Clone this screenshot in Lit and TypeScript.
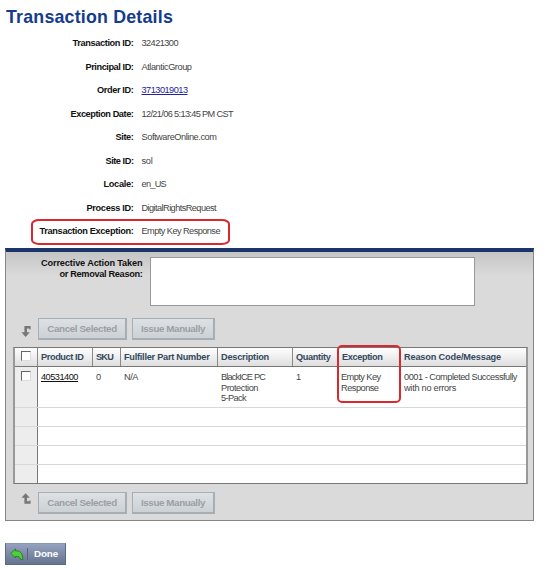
import { LitElement, html, css, svg } from "lit";
import { customElement, property } from "lit/decorators.js";

/** A single line of text whose tracking is adjusted to fill a given width. */
@customElement("fit-text")
class FitText extends LitElement {
  @property({ type: Number }) w = 0;
  static styles = css`
    :host { display: inline-block; white-space: nowrap; }
  `;
  render() {
    return html`<slot></slot>`;
  }
  firstUpdated() {
    const n = (this.textContent ?? "").length;
    const natural = this.getBoundingClientRect().width;
    if (n && natural) {
      const gap = (this.w - natural) / n;
      this.style.letterSpacing = `${gap.toFixed(3)}px`;
    }
  }
}

const fields: [string, number, string, number][] = [
  ["Transaction ID:", 61, "32421300", 36.5],
  ["Principal ID:", 48, "AtlanticGroup", 50],
  ["Order ID:", 36.5, "3713019013", 46],
  ["Exception Date:", 63, "12/21/06 5:13:45 PM CST", 91.5],
  ["Site:", 18, "SoftwareOnline.com", 75],
  ["Site ID:", 28, "sol", 11],
  ["Locale:", 30, "en_US", 24.5],
  ["Process ID:", 47, "DigitalRightsRequest", 74.5],
  ["Transaction Exception:", 94, "Empty Key Response", 78.5],
];

const headers: [string, number][] = [
  ["Product ID", 42.5],
  ["SKU", 17],
  ["Fulfiller Part Number", 85.5],
  ["Description", 48],
  ["Quantity", 34.5],
  ["Exception", 40.5],
  ["Reason Code/Message", 97],
];

const cells: [string, number][][] = [
  [["40531400", 37]],
  [["0", 5]],
  [["N/A", 14]],
  [["BlackICE PC", 44], ["Protection", 37], ["5-Pack", 25]],
  [["1", 5]],
  [["Empty Key", 39.5], ["Response", 37.5]],
  [["0001 - Completed Successfully", 113], ["with no errors", 52]],
];

const downArrow = svg`<path d="M3.4 0H9.6V3.6H8.4V2.6H6V6.2H8.8L4.6 11L0.4 6.2H3.4Z" fill="#777"/>`;
const upArrow = svg`<path d="M3.4 10.8H9.6V7.4H8.4V8.2H6V4.8H8.8L4.6 0.2L0.4 4.8H3.4Z" fill="#777"/>`;

@customElement("app-root")
class AppRoot extends LitElement {
  static styles = css`
    * { box-sizing: border-box; }
    :host {
      display: block;
      position: relative;
      width: 550px;
      height: 570px;
      overflow: hidden;
      background: #fff;
      color: #444;
      font: 9.2px/10.6px "Liberation Sans", Arial, sans-serif;
    }
    h1 {
      margin: 0;
      padding: 7px 0 0 6px;
      height: 32px;
      font-size: 17.8px;
      line-height: 20px;
      color: #143c8c;
    }
    .field { display: flex; height: 23.5px; align-items: center; }
    .label {
      width: 133.5px;
      margin-right: 8px;
      text-align: right;
      font-weight: bold;
      color: #111;
    }
    .link { color: #22229a; text-decoration: underline; }
    .panel {
      margin: 4.5px 0 0 5px;
      width: 529px;
      height: 273px;
      border: 1px solid #858585;
      border-top: 4px solid #1b356b;
      background: linear-gradient(#c5c5c5, #dadada 24px);
    }
    .reason { display: flex; height: 66px; padding-top: 5px; }
    .caption {
      width: 136.5px;
      margin-right: 7.5px;
      padding-top: 1px;
      text-align: right;
      font-weight: bold;
      color: #111;
    }
    .area {
      width: 325px;
      height: 49px;
      background: #fff;
      border: 1px solid #999;
    }
    .actions { display: flex; height: 22px; padding-left: 14px; }
    .actions svg { width: 12px; height: 12px; margin: 8px 5px 0 1px; }
    .actions.low svg { margin-top: 1px; }
    .btn {
      height: 22px;
      display: flex;
      align-items: center;
      justify-content: center;
      border: 1px solid #a6adb3;
      border-right-width: 2px;
      border-bottom-width: 2px;
      background: linear-gradient(#dde1e4, #ccd1d6);
      color: #9b9fa3;
      font-weight: bold;
      font-size: 9.8px;
      padding-top: 1px;
    }
    .cancel { width: 89px; margin-right: 5px; }
    .issue { width: 83px; }
    .table {
      margin: 7px 0 8px 7px;
      width: 515px;
      height: 137px;
      border: 1px solid #777;
      border-left: 2px solid #999;
      border-right: 2px solid #999;
      background: #fff;
    }
    .row {
      display: grid;
      grid-template-columns: 22px 55px 28px 97px 75px 45px 62px 1fr;
      height: 19px;
      border-bottom: 1px solid #d8d8d8;
    }
    .row:last-child { height: 18px; border-bottom: 0; }
    .row > div { padding: 5px 0 0 4px; }
    .row > .pick { padding: 3px 0 0 6px; background: #ededed; }
    .row > .first { border-left: 1px solid #777; padding-left: 4px; }
    .head {
      border-bottom: 1px solid #777;
      background: linear-gradient(#fff, #dedede);
      color: #34495e;
      font-weight: bold;
    }
    .row.head > div { border-left: 1px solid #888; padding: 4px 0 0 3px; }
    .row.head > .pick { border-left: 0; background: none; padding: 3px 0 0 6px; }
    .row.head > .exc { border-left-color: transparent; padding-left: 4px; }
    .row.head > div:last-child { padding-left: 4px; }
    .body { height: 41px; }
    .row.body > .first { padding-left: 3px; }
    .row.body > .pick { padding-top: 4px; }
    .row.body > div:last-child { padding-left: 5px; }
    .pid { color: #111; text-decoration: underline; }
    .box {
      width: 10px;
      height: 10px;
      background: #fff;
      border: 1px solid #ddd;
      border-top: 1px solid #666;
      border-left: 1px solid #666;
    }
    .done {
      margin: 22px 0 0 5px;
      width: 61px;
      height: 22px;
      display: flex;
      align-items: center;
      border: 1px solid #5d6a86;
      border-top-color: #8b97b1;
      background: linear-gradient(#94a2bf, #66738f);
      color: #fff;
      font-weight: bold;
      font-size: 9.8px;
    }
    .done svg { width: 14px; height: 13px; margin-left: 4px; }
    .bar { width: 1px; height: 12px; background: #56647f; margin: 0 6px 0 3px; }
    .mark {
      position: absolute;
      border: 2px solid #d9282e;
    }
    .mark-field { left: 30.5px; top: 219px; width: 199px; height: 26px; border-radius: 8px / 5px; }
    .mark-col { left: 337px; top: 345px; width: 64px; height: 58px; border-radius: 5px; }
  `;

  private actions(low: boolean) {
    return html`<div class="actions ${low ? "low" : ""}">
      <svg viewBox="0 0 12 12">${low ? upArrow : downArrow}</svg>
      <div class="btn cancel"><fit-text w="69.5">Cancel Selected</fit-text></div>
      <div class="btn issue"><fit-text w="64">Issue Manually</fit-text></div>
    </div>`;
  }

  render() {
    return html`
      <h1><fit-text w="167">Transaction Details</fit-text></h1>
      ${fields.map(
        ([label, lw, value, vw]) => html`<div class="field">
          <div class="label"><fit-text w=${lw}>${label}</fit-text></div>
          <fit-text class=${label === "Order ID:" ? "link" : ""} w=${vw}>${value}</fit-text>
        </div>`
      )}
      <div class="panel">
        <div class="reason">
          <div class="caption">
            <fit-text w="101.5">Corrective Action Taken</fit-text>
            <fit-text w="83">or Removal Reason:</fit-text>
          </div>
          <div class="area"></div>
        </div>
        ${this.actions(false)}
        <div class="table">
          <div class="row head">
            <div class="pick"><div class="box"></div></div>
            ${headers.map(
              ([t, w], i) => html`<div class=${i === 5 ? "exc" : i === 0 ? "first" : ""}>
                <fit-text w=${w}>${t}</fit-text>
              </div>`
            )}
          </div>
          <div class="row body">
            <div class="pick"><div class="box"></div></div>
            ${cells.map(
              (lines, i) => html`<div class=${i === 5 ? "exc" : i === 0 ? "first" : ""}>
                ${lines.map(
                  ([t, w]) => html`<fit-text class=${i === 0 ? "pid" : ""} w=${w}>${t}</fit-text><br />`
                )}
              </div>`
            )}
          </div>
          ${[0, 1, 2, 3].map(
            () => html`<div class="row"><div class="pick"></div><div class="first"></div></div>`
          )}
        </div>
        ${this.actions(true)}
      </div>
      <div class="done">
        <svg viewBox="0 0 14 13">
          <path d="M0.8 5.4L5.4 0.9V2.9C9.8 2.4 12.8 5 12.8 11.6H10.8C10.2 9 8.4 8.2 5.4 8.4V10Z"
            fill="#4fd03a" stroke="#1a761b" stroke-width="0.8" stroke-linejoin="round" />
        </svg>
        <span class="bar"></span>
        <fit-text w="24">Done</fit-text>
      </div>
      <div class="mark mark-field"></div>
      <div class="mark mark-col"></div>
    `;
  }
}
